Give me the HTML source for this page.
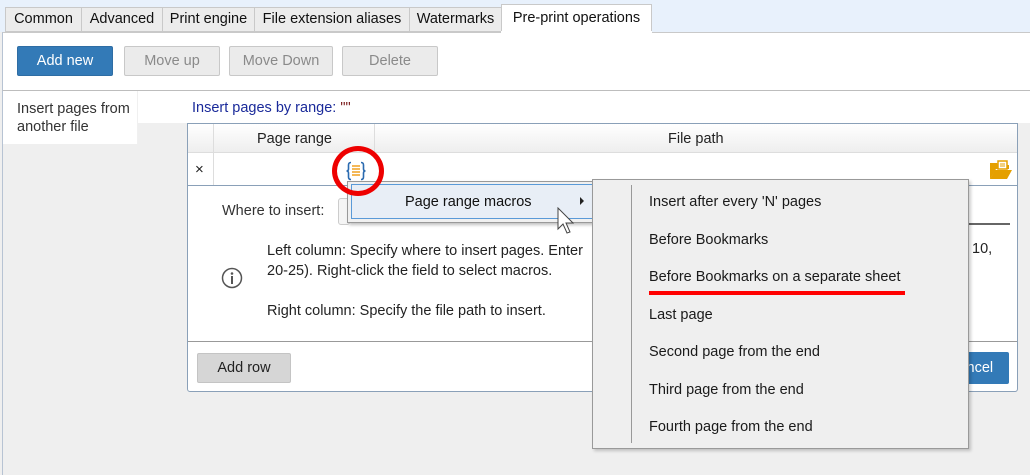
<!DOCTYPE html>
<html><head><style>
*{margin:0;padding:0;box-sizing:border-box}
body{width:1030px;height:475px;overflow:hidden;background:#efefef;font-family:"Liberation Sans",sans-serif;font-size:14px;color:#222;position:relative}
.a{position:absolute}
.tab{position:absolute;top:7px;height:25px;border:1px solid #c9c9c9;background:#ececec;font-size:14.5px;line-height:23px;text-align:center;color:#111}
.btn{position:absolute;top:46px;height:30px;border:1px solid #c8c8c8;background:#ebebeb;color:#8a8a8a;font-size:14.5px;line-height:28px;text-align:center;border-radius:2px}
.mi{position:absolute;left:649px;font-size:14.5px;color:#1a1a1a}
</style></head><body>
<div class="a" style="left:0;top:0;width:1030px;height:32px;background:#e8f1fc"></div>
<div class="tab" style="left:5px;width:77px">Common</div>
<div class="tab" style="left:81px;width:82px">Advanced</div>
<div class="tab" style="left:162px;width:93px">Print engine</div>
<div class="tab" style="left:254px;width:156px">File extension aliases</div>
<div class="tab" style="left:409px;width:93px">Watermarks</div>
<div class="tab" style="left:501px;top:4px;height:29px;width:151px;background:#fff;border-bottom:none;line-height:27px">Pre-print operations</div>
<div class="a" style="left:2px;top:32px;width:1028px;height:59px;background:#fff;border-top:1px solid #c9c9c9;border-bottom:1px solid #bdbdbd;border-left:1px solid #b7c3d3"></div>
<div class="a" style="left:501px;top:31px;width:151px;height:2px;background:#fff"></div>
<div class="btn" style="left:17px;width:96px;background:#337ab7;border-color:#2e6da4;color:#fff">Add new</div>
<div class="btn" style="left:124px;width:96px">Move up</div>
<div class="btn" style="left:229px;width:104px">Move Down</div>
<div class="btn" style="left:342px;width:96px">Delete</div>
<div class="a" style="left:2px;top:91px;width:1028px;height:32px;background:#fff;border-left:1px solid #b7c3d3"></div>
<div class="a" style="left:2px;top:91px;width:136px;height:53px;background:#fff;border-left:1px solid #b7c3d3;border-right:1px solid #f0f0f0"></div>
<div class="a" style="left:2px;top:144px;width:1px;height:331px;background:#b7c3d3"></div>
<div class="a" style="left:17px;top:100px;line-height:18px;color:#333;font-size:14.5px">Insert pages from<br>another file</div>
<div class="a" style="left:192px;top:100px;color:#1a2a9a;font-size:14.5px">Insert pages by range: <span style="color:#7a1a1a">""</span></div>
<!-- dialog -->
<div class="a" style="left:187px;top:123px;width:831px;height:269px;background:#fff;border:1px solid #8aa0b8;border-radius:0 0 3px 3px"></div>
<div class="a" style="left:188px;top:124px;width:829px;height:29px;background:linear-gradient(#fff,#eee);border-bottom:1px solid #ddd"></div>
<div class="a" style="left:213px;top:124px;width:1px;height:61px;background:#ddd"></div>
<div class="a" style="left:374px;top:124px;width:1px;height:29px;background:#ddd"></div>
<div class="a" style="left:257px;top:131px;font-size:14.5px">Page range</div>
<div class="a" style="left:668px;top:131px;font-size:14.5px">File path</div>
<div class="a" style="left:188px;top:185px;width:829px;height:1px;background:#8aa0b8"></div>
<div class="a" style="left:195px;top:161px;font-size:15px">×</div>
<svg class="a" style="left:345px;top:160px" width="22" height="22" viewBox="0 0 22 22"><path d="M6 2.5Q3.5 2.5 3.5 5V9Q3.5 11 1.5 11Q3.5 11 3.5 13V17Q3.5 19.5 6 19.5M16 2.5Q18.5 2.5 18.5 5V9Q18.5 11 20.5 11Q18.5 11 18.5 13V17Q18.5 19.5 16 19.5" fill="none" stroke="#2a6ab0" stroke-width="1.6"/><path d="M7 6h8M7 9h8M7 12h8M7 15h8" stroke="#f0a020" stroke-width="1.6"/></svg>
<svg class="a" style="left:989px;top:160px" width="24" height="20" viewBox="0 0 24 20"><path d="M1 3h7l2 2h10v4H7L1 19z" fill="#e5a000"/><path d="M6 10h17l-5 9H1z" fill="#e5a000"/><rect x="9" y="1" width="9" height="8" fill="#fff" stroke="#e5a000" stroke-width="1.5"/><path d="M11 4h5M11 6h5" stroke="#e5a000"/></svg>
<div class="a" style="left:222px;top:203px;color:#333;font-size:14.5px">Where to insert:</div>
<div class="a" style="left:338px;top:198px;width:12px;height:27px;border:1px solid #ccc;border-radius:3px;background:#f5f5f5"></div>
<div class="a" style="left:968px;top:223px;width:42px;height:2px;background:#666"></div>
<svg class="a" style="left:221px;top:267px" width="22" height="22"><circle cx="11" cy="11" r="9.5" fill="none" stroke="#555" stroke-width="1.5"/><circle cx="11" cy="6.5" r="1.3" fill="#555"/><rect x="10" y="9" width="2" height="8" fill="#555"/></svg>
<div class="a" style="left:267px;top:241px;line-height:20px;color:#222;font-size:14.5px">Left column: Specify where to insert pages. Enter<br>20-25). Right-click the field to select macros.<br><br>Right column: Specify the file path to insert.</div>
<div class="a" style="left:972px;top:241px;color:#222;font-size:14.5px">10,</div>
<div class="a" style="left:188px;top:341px;width:829px;height:1px;background:#999"></div>
<div class="a" style="left:197px;top:353px;width:94px;height:30px;background:#d6d6d6;border:1px solid #c4c4c4;border-radius:2px;text-align:center;line-height:28px;font-size:14.5px">Add row</div>
<div class="a" style="left:930px;top:352px;width:79px;height:32px;background:#337ab7;border-radius:2px;color:#fff;line-height:32px;padding-left:18px;font-size:14.5px">Cancel</div>
<!-- menu 1 -->
<div class="a" style="left:347px;top:181px;width:247px;height:42px;background:#f0f0f0;border:1px solid #999;box-shadow:2px 2px 3px rgba(0,0,0,.25)"></div>
<div class="a" style="left:351px;top:184px;width:242px;height:35px;background:#e8eef6;border:1px solid #5a9ad8"></div>
<div class="a" style="left:405px;top:194px;color:#111;font-size:14.5px">Page range macros</div>
<div class="a" style="left:580px;top:197px;width:0;height:0;border-left:4px solid #222;border-top:4px solid transparent;border-bottom:4px solid transparent"></div>
<svg class="a" style="left:557px;top:207px" width="20" height="28"><path d="M1 1v21l5-5 4 9 3-1-4-9h7z" fill="#fff" stroke="#444" stroke-width="1"/></svg>
<!-- submenu -->
<div class="a" style="left:592px;top:179px;width:377px;height:270px;background:#efefef;border:1px solid #999;box-shadow:2px 2px 3px rgba(0,0,0,.2)"></div>
<div class="a" style="left:631px;top:185px;width:1px;height:258px;background:#999"></div>
<div class="mi" style="top:194px">Insert after every 'N' pages</div>
<div class="mi" style="top:232px">Before Bookmarks</div>
<div class="mi" style="top:269px">Before Bookmarks on a separate sheet</div>
<div class="a" style="left:649px;top:291px;width:256px;height:4px;background:#f00"></div>
<div class="mi" style="top:307px">Last page</div>
<div class="mi" style="top:344px">Second page from the end</div>
<div class="mi" style="top:382px">Third page from the end</div>
<div class="mi" style="top:419px">Fourth page from the end</div>
<div class="a" style="left:332px;top:146px;width:52px;height:50px;border:5px solid #e00;border-radius:50%"></div>
</body></html>
